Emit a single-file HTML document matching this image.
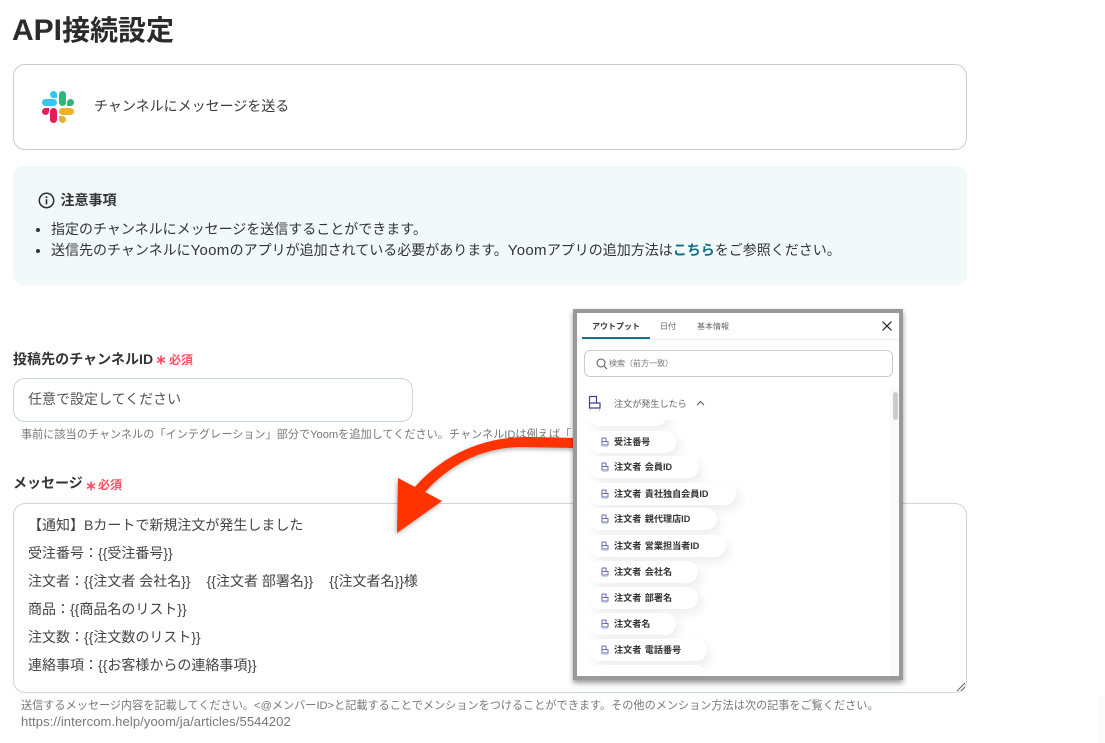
<!DOCTYPE html>
<html lang="ja"><head><meta charset="utf-8"><title>API接続設定</title>
<style>
html,body{margin:0;padding:0;background:#fff}
#p{position:relative;width:1105px;height:743px;overflow:hidden;background:#fff;font-family:"Liberation Sans","Noto Sans CJK JP",sans-serif;color:#333}
#p div{position:absolute;white-space:nowrap}
.t{line-height:20px;font-size:14px}
.b{border:1px solid #ccc;background:#fff;box-sizing:border-box}
.h{font-size:11.15px;line-height:16px;color:#777}
.pill{left:589px;height:22px;background:#fff;border-radius:11px;box-shadow:4px 5px 10px rgba(0,0,0,.07)}
.pill svg{position:absolute;left:12px;top:6px}
.pill span{position:absolute;left:25px;top:0;line-height:22px;font-size:9.1px;word-spacing:1px;font-weight:700;color:#333;white-space:nowrap;filter:blur(.3px)}
.rq{font-size:12px;font-weight:700;color:#ff4d5e;line-height:16px}
.tab{font-size:8px;line-height:12px;color:#666;filter:blur(.3px)}
.y{font-size:15px;letter-spacing:.3px}
.g{letter-spacing:2px}
</style></head><body><div id="p">

<div style="left:12px;top:13px;font-size:28px;line-height:36px;font-weight:700;color:#2b2b2b"><span style="font-size:30px">API</span>接続設定</div>

<div class="b" style="left:13px;top:64px;width:954px;height:86px;border-radius:12px"></div>
<svg style="position:absolute;left:0;top:0" width="100" height="130">
<rect x="50" y="91" width="7" height="7" rx="3.5" fill="#36c5f0"/><rect x="53" y="94" width="4" height="4" fill="#36c5f0"/>
<rect x="42" y="99" width="15" height="7" rx="3.500" fill="#36c5f0"/>
<rect x="59" y="91" width="7" height="15" rx="3.500" fill="#2eb67d"/>
<rect x="67" y="99" width="7" height="7" rx="3.500" fill="#2eb67d"/><rect x="67" y="102" width="4" height="4" fill="#2eb67d"/>
<rect x="42" y="108" width="7" height="7" rx="3.500" fill="#e01e5a"/><rect x="45" y="108" width="4" height="4" fill="#e01e5a"/>
<rect x="50" y="108" width="7" height="15" rx="3.500" fill="#e01e5a"/>
<rect x="59" y="108" width="15" height="7" rx="3.500" fill="#ecb22e"/>
<rect x="59" y="116" width="7" height="7" rx="3.500" fill="#ecb22e"/><rect x="59" y="116" width="4" height="4" fill="#ecb22e"/>
</svg>
<div class="t" style="left:94px;top:96px;color:#3a3a3a">チャンネルにメッセージを送る</div>

<div style="left:13px;top:166px;width:954px;height:119px;background:#f2faf9;border-radius:10px"></div>
<svg style="position:absolute;left:38px;top:192px" width="17" height="17" viewBox="0 0 17 17"><circle cx="8.500" cy="8.500" r="7.200" fill="none" stroke="#2a2a2a" stroke-width="1.500"/><rect x="7.700" y="7.300" width="1.600" height="5" fill="#2a2a2a"/><circle cx="8.500" cy="5.200" r="1" fill="#2a2a2a"/></svg>
<div class="t" style="left:60.500px;top:190px;font-weight:700;color:#333">注意事項</div>
<div style="left:36px;top:228px;width:4px;height:4px;border-radius:50%;background:#333"></div>
<div style="left:36px;top:249px;width:4px;height:4px;border-radius:50%;background:#333"></div>
<div class="t" style="left:51px;top:219px">指定のチャンネルにメッセージを送信することができます。</div>
<div class="t" style="left:51px;top:240px">送信先のチャンネルに<span class="y">Yoom</span>のアプリが追加されている必要があります。<span class="y">Yoom</span>アプリの追加方法は<b style="color:#0f6e8c">こちら</b>をご参照ください。</div>

<div class="t" style="left:13px;top:349px;font-weight:700;color:#333;letter-spacing:.05px">投稿先のチャンネルID</div>
<svg style="position:absolute;left:156px;top:355px" width="10" height="10"><path d="M5 .5V9.500M1 2.700L9 7.300M9 2.700L1 7.300" stroke="#ff4d5e" stroke-width="1.600"/></svg>
<div class="rq" style="left:169px;top:352px">必須</div>
<div class="b" style="left:13px;top:378px;width:400px;height:44px;border-radius:12px;border-color:#cfd3da"></div>
<div class="t" style="left:28px;top:389px;color:#555">任意で設定してください</div>
<div class="h" style="left:21px;top:427px">事前に該当のチャンネルの「インテグレーション」部分でYoomを追加してください。チャンネルIDは例えば「</div>

<div class="t" style="left:13px;top:473px;font-weight:700;color:#333">メッセージ</div>
<svg style="position:absolute;left:86px;top:481px" width="10" height="10"><path d="M5 .5V9.500M1 2.700L9 7.300M9 2.700L1 7.300" stroke="#ff4d5e" stroke-width="1.600"/></svg>
<div class="rq" style="left:98px;top:477px">必須</div>
<div class="b" style="left:13px;top:503px;width:954px;height:190px;border-radius:12px;border-color:#cfd3da"></div>
<svg style="position:absolute;left:956px;top:682px" width="10" height="10"><path d="M1 9L9 1M5 9L9 5" stroke="#666" stroke-width="1"/></svg>
<div class="t" style="left:28px;top:515px;color:#444">【通知】Bカートで新規注文が発生しました</div>
<div class="t" style="left:28px;top:543px;color:#444">受注番号：{{受注番号}}</div>
<div class="t" style="left:28px;top:571px;color:#444">注文者：{{注文者 会社名}}<span class="g">　</span>{{注文者 部署名}}<span class="g">　</span>{{注文者名}}様</div>
<div class="t" style="left:28px;top:599px;color:#444">商品：{{商品名のリスト}}</div>
<div class="t" style="left:28px;top:627px;color:#444">注文数：{{注文数のリスト}}</div>
<div class="t" style="left:28px;top:655px;color:#444">連絡事項：{{お客様からの連絡事項}}</div>
<div class="h" style="left:21px;top:698px">送信するメッセージ内容を記載してください。&lt;@メンバーID&gt;と記載することでメンションをつけることができます。その他のメンション方法は次の記事をご覧ください。</div>
<div class="h" style="left:21px;top:714px;font-size:13px;letter-spacing:.1px">https://intercom.help/yoom/ja/articles/5544202</div>
<div style="left:1098px;top:695px;width:7px;height:48px;background:#fbfbfb"></div>

<svg style="position:absolute;left:0;top:0;filter:drop-shadow(-1px 2px 2px rgba(0,0,0,.3))" width="600" height="560">
<path d="M398 478L415 487C440 458 480 436 530 437L575 438L575 448L520 447C480 448 450 465 425 492L442 501L397 533Z" fill="#ff3300"/>
</svg>

<!-- popup -->
<div style="left:573px;top:309px;width:330px;height:371px;box-sizing:border-box;border:4px solid #999;background:#fff;box-shadow:0 3px 5px rgba(0,0,0,.4)"></div>
<div class="tab" style="left:592px;top:321px;font-weight:700;color:#333">アウトプット</div>
<div class="tab" style="left:660px;top:321px">日付</div>
<div class="tab" style="left:697px;top:321px">基本情報</div>
<div style="left:577px;top:339px;width:322px;height:1px;background:#eee"></div>
<div style="left:582px;top:337px;width:68px;height:2px;background:#1d6f8a"></div>
<svg style="position:absolute;left:881px;top:320px" width="12" height="12"><path d="M1.500 1.500L10.500 10.500M10.500 1.500L1.500 10.500" stroke="#222" stroke-width="1.200"/></svg>
<div class="b" style="left:584px;top:350px;width:309px;height:27px;border-radius:6px"></div>
<svg style="position:absolute;left:596px;top:358px" width="12" height="12"><circle cx="5" cy="5" r="4" fill="none" stroke="#555" stroke-width="1"/><path d="M8 8L11 11" stroke="#555" stroke-width="1"/></svg>
<div class="tab" style="left:609px;top:358px;color:#777">検索（前方一致）</div>

<div style="left:890px;top:387px;width:9px;height:289px;background:#fafafa"></div>
<div style="left:893px;top:392px;width:5px;height:28px;background:#ccc;border-radius:3px"></div>

<svg style="position:absolute;left:588px;top:395px" width="14" height="17"><path d="M1.500 1.500H8.500V8M1.500 1.500V13H12V8H1.500" fill="none" stroke="#3f3f8f" stroke-width="1.200"/><path d="M2 15h1M11 15h1" stroke="#4aa3f0" stroke-width="1"/></svg>
<div style="left:614px;top:398px;font-size:9.100px;line-height:13px;color:#666;filter:blur(.3px)">注文が発生したら</div>
<svg style="position:absolute;left:696px;top:400px" width="9" height="7"><path d="M1 5L4.500 1.500L8 5" fill="none" stroke="#555" stroke-width="1"/></svg>

<div class="pill" style="left:589px;top:404px;width:78px;clip-path:inset(16px -20px -20px -20px)"></div>
<div class="pill" style="top:431px;width:87px"><svg width="8" height="10"><path d="M1 1H5V4.500M1 1V8H7V4.500H1" fill="none" stroke="#6a6ab5"/><path d="M1 9.500h6" stroke="#bcdcf8"/></svg><span>受注番号</span></div>
<div class="pill" style="top:456px;width:110px"><svg width="8" height="10"><path d="M1 1H5V4.500M1 1V8H7V4.500H1" fill="none" stroke="#6a6ab5"/><path d="M1 9.500h6" stroke="#bcdcf8"/></svg><span>注文者 会員ID</span></div>
<div class="pill" style="top:483px;width:147px"><svg width="8" height="10"><path d="M1 1H5V4.500M1 1V8H7V4.500H1" fill="none" stroke="#6a6ab5"/><path d="M1 9.500h6" stroke="#bcdcf8"/></svg><span>注文者 貴社独自会員ID</span></div>
<div class="pill" style="top:508px;width:128px"><svg width="8" height="10"><path d="M1 1H5V4.500M1 1V8H7V4.500H1" fill="none" stroke="#6a6ab5"/><path d="M1 9.500h6" stroke="#bcdcf8"/></svg><span>注文者 親代理店ID</span></div>
<div class="pill" style="top:535px;width:137px"><svg width="8" height="10"><path d="M1 1H5V4.500M1 1V8H7V4.500H1" fill="none" stroke="#6a6ab5"/><path d="M1 9.500h6" stroke="#bcdcf8"/></svg><span>注文者 営業担当者ID</span></div>
<div class="pill" style="top:561px;width:109px"><svg width="8" height="10"><path d="M1 1H5V4.500M1 1V8H7V4.500H1" fill="none" stroke="#6a6ab5"/><path d="M1 9.500h6" stroke="#bcdcf8"/></svg><span>注文者 会社名</span></div>
<div class="pill" style="top:587px;width:109px"><svg width="8" height="10"><path d="M1 1H5V4.500M1 1V8H7V4.500H1" fill="none" stroke="#6a6ab5"/><path d="M1 9.500h6" stroke="#bcdcf8"/></svg><span>注文者 部署名</span></div>
<div class="pill" style="top:613px;width:87px"><svg width="8" height="10"><path d="M1 1H5V4.500M1 1V8H7V4.500H1" fill="none" stroke="#6a6ab5"/><path d="M1 9.500h6" stroke="#bcdcf8"/></svg><span>注文者名</span></div>
<div class="pill" style="top:639px;width:118px"><svg width="8" height="10"><path d="M1 1H5V4.500M1 1V8H7V4.500H1" fill="none" stroke="#6a6ab5"/><path d="M1 9.500h6" stroke="#bcdcf8"/></svg><span>注文者 電話番号</span></div>
<div class="pill" style="top:665px;width:118px;clip-path:inset(-20px -20px 17px -20px)"></div>
</div></body></html>
